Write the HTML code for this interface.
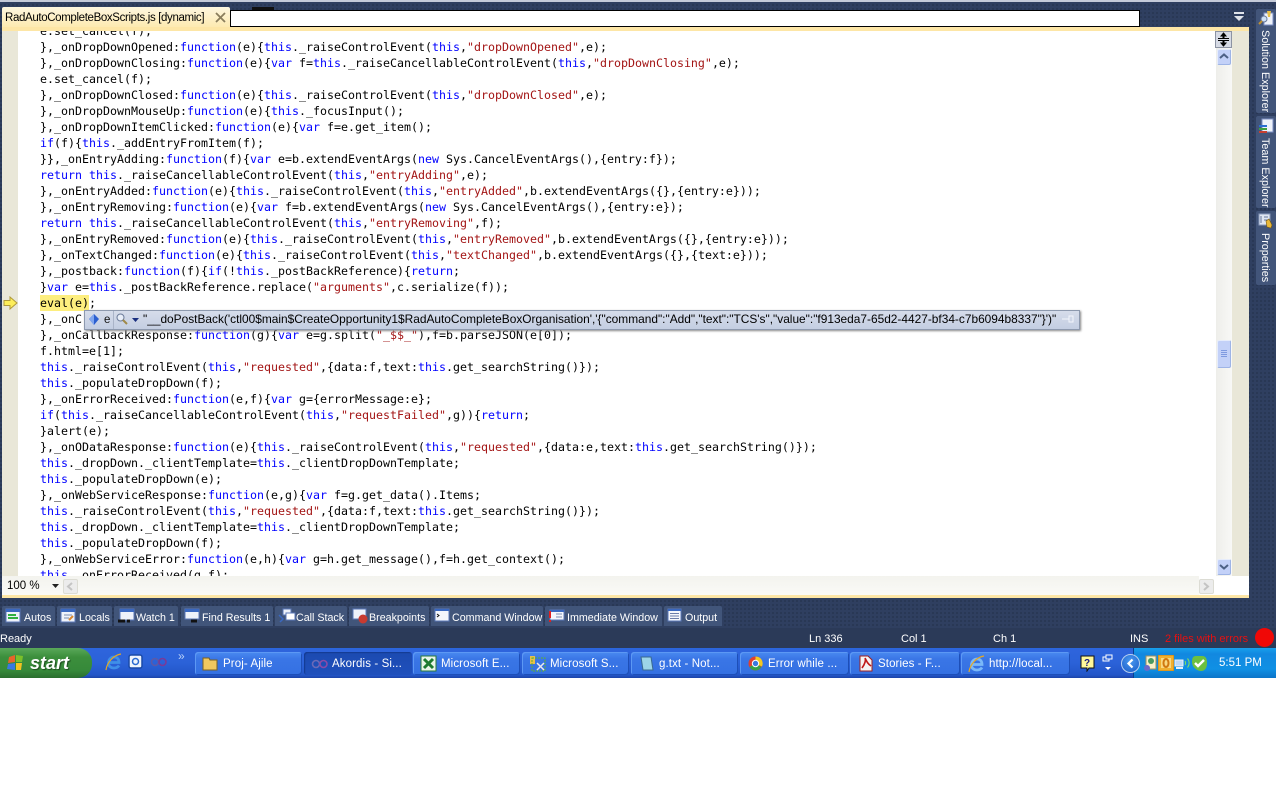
<!DOCTYPE html>
<html><head><meta charset="utf-8"><title>RadAutoCompleteBoxScripts.js</title>
<style>
html,body{margin:0;padding:0;background:#fff;width:1280px;height:800px;overflow:hidden}
*{box-sizing:border-box}
.a{position:absolute}
#root{position:absolute;left:0;top:0;width:1276px;height:800px;overflow:hidden;font-family:"Liberation Sans",sans-serif;font-size:11px;background:#fff}
#bg{left:0;top:0;width:1276px;height:628px;background-color:#2f3f60;background-image:radial-gradient(circle at 1px 1px,#273551 0.9px,transparent 1px);background-size:4px 4px}
pre{margin:0;font-family:"DejaVu Sans Mono",monospace;font-size:11.635px;line-height:16px;color:#000;position:absolute;left:40px;top:-8px}
pre i{font-style:normal;color:#0000ff}
pre u{text-decoration:none;color:#a31515}
.tab{position:absolute;top:606px;height:20px;background:#41557a;border-radius:2px 2px 0 0;color:#fff;font-size:10.7px;line-height:23px;white-space:nowrap}
.tab span{position:absolute;top:1px}
.tab svg{position:absolute;left:3px;top:2px}
.tb{position:absolute;top:652px;height:23px;background:linear-gradient(#4a8af0,#3a76e6 30%,#3470e2);border-radius:3px;color:#fff;font-size:11.5px;line-height:23px;white-space:nowrap;box-shadow:inset 1px 1px 0 #5c98f4,inset -1px -1px 0 #1d4fb8}
.tb span{position:absolute;left:28px;top:1px;letter-spacing:.1px}
.tb svg{position:absolute;left:7px;top:3px}
.side{position:absolute;left:1256px;width:20px;background:#42557a;color:#fff;font-size:10.8px;border-radius:2px}
.side span{position:absolute;left:2px;writing-mode:vertical-rl;white-space:nowrap;line-height:14px}
.st{position:absolute;top:631px;color:#fff;font-size:11px;line-height:16px;white-space:nowrap}
</style></head><body>
<div id="root">
<div class="a" id="bg"></div>
<div class="a" style="left:0;top:0;width:1276px;height:2px;background:#c4cad8"></div>

<div class="a" style="left:252px;top:7px;width:22px;height:3px;background:#111"></div>

<!-- tab -->
<div class="a" style="left:2px;top:7px;width:228px;height:22px;background:linear-gradient(#fdf6df,#fde9ac);border-radius:2px 2px 0 0"></div>
<div class="a" style="left:5px;top:10px;font-size:11.5px;letter-spacing:-.36px;line-height:17px;white-space:nowrap;color:#000">RadAutoCompleteBoxScripts.js [dynamic]</div>
<svg class="a" style="left:214px;top:12px" width="13" height="12" viewBox="0 0 13 12"><path d="M2 1L11 10M11 1L2 10" stroke="#8a7d5c" stroke-width="1.8" fill="none"/></svg>
<div class="a" style="left:230px;top:10px;width:910px;height:17px;background:#fff;border:1px solid #000"></div>
<svg class="a" style="left:1233px;top:12px" width="12" height="10" viewBox="0 0 12 10"><rect x="1" y="0" width="10" height="2" fill="#dfe3ea"/><path d="M1 4H11L6 9Z" fill="#dfe3ea"/></svg>

<!-- editor -->
<div class="a" style="left:2px;top:27px;width:1247px;height:571px;background:#fff"></div>
<div class="a" style="left:2px;top:27px;width:1247px;height:4px;background:#fde6a6"></div>
<div class="a" style="left:2px;top:31px;width:16px;height:545px;background:#e9e7d8"></div>
<div class="a" style="left:18px;top:31px;width:1198px;height:545px;overflow:hidden;background:#fff">
<div class="a" style="left:22px;top:264px;width:49px;height:16px;background:#fdee7e"></div>
<pre style="left:22px;top:-8px">e.set_cancel(f);
},_onDropDownOpened:<i>function</i>(e){<i>this</i>._raiseControlEvent(<i>this</i>,<u>"dropDownOpened"</u>,e);
},_onDropDownClosing:<i>function</i>(e){<i>var</i> f=<i>this</i>._raiseCancellableControlEvent(<i>this</i>,<u>"dropDownClosing"</u>,e);
e.set_cancel(f);
},_onDropDownClosed:<i>function</i>(e){<i>this</i>._raiseControlEvent(<i>this</i>,<u>"dropDownClosed"</u>,e);
},_onDropDownMouseUp:<i>function</i>(e){<i>this</i>._focusInput();
},_onDropDownItemClicked:<i>function</i>(e){<i>var</i> f=e.get_item();
<i>if</i>(f){<i>this</i>._addEntryFromItem(f);
}},_onEntryAdding:<i>function</i>(f){<i>var</i> e=b.extendEventArgs(<i>new</i> Sys.CancelEventArgs(),{entry:f});
<i>return</i> <i>this</i>._raiseCancellableControlEvent(<i>this</i>,<u>"entryAdding"</u>,e);
},_onEntryAdded:<i>function</i>(e){<i>this</i>._raiseControlEvent(<i>this</i>,<u>"entryAdded"</u>,b.extendEventArgs({},{entry:e}));
},_onEntryRemoving:<i>function</i>(e){<i>var</i> f=b.extendEventArgs(<i>new</i> Sys.CancelEventArgs(),{entry:e});
<i>return</i> <i>this</i>._raiseCancellableControlEvent(<i>this</i>,<u>"entryRemoving"</u>,f);
},_onEntryRemoved:<i>function</i>(e){<i>this</i>._raiseControlEvent(<i>this</i>,<u>"entryRemoved"</u>,b.extendEventArgs({},{entry:e}));
},_onTextChanged:<i>function</i>(e){<i>this</i>._raiseControlEvent(<i>this</i>,<u>"textChanged"</u>,b.extendEventArgs({},{text:e}));
},_postback:<i>function</i>(f){<i>if</i>(!<i>this</i>._postBackReference){<i>return</i>;
}<i>var</i> e=<i>this</i>._postBackReference.replace(<u>"arguments"</u>,c.serialize(f));
eval(e);
},_onC
},_onCallbackResponse:<i>function</i>(g){<i>var</i> e=g.split(<u>"_$$_"</u>),f=b.parseJSON(e[0]);
f.html=e[1];
<i>this</i>._raiseControlEvent(<i>this</i>,<u>"requested"</u>,{data:f,text:<i>this</i>.get_searchString()});
<i>this</i>._populateDropDown(f);
},_onErrorReceived:<i>function</i>(e,f){<i>var</i> g={errorMessage:e};
<i>if</i>(<i>this</i>._raiseCancellableControlEvent(<i>this</i>,<u>"requestFailed"</u>,g)){<i>return</i>;
}alert(e);
},_onODataResponse:<i>function</i>(e){<i>this</i>._raiseControlEvent(<i>this</i>,<u>"requested"</u>,{data:e,text:<i>this</i>.get_searchString()});
<i>this</i>._dropDown._clientTemplate=<i>this</i>._clientDropDownTemplate;
<i>this</i>._populateDropDown(e);
},_onWebServiceResponse:<i>function</i>(e,g){<i>var</i> f=g.get_data().Items;
<i>this</i>._raiseControlEvent(<i>this</i>,<u>"requested"</u>,{data:f,text:<i>this</i>.get_searchString()});
<i>this</i>._dropDown._clientTemplate=<i>this</i>._clientDropDownTemplate;
<i>this</i>._populateDropDown(f);
},_onWebServiceError:<i>function</i>(e,h){<i>var</i> g=h.get_message(),f=h.get_context();
<i>this</i>._onErrorReceived(g,f);</pre>
</div>
<!-- arrow -->
<svg class="a" style="left:3px;top:296px" width="15" height="14" viewBox="0 0 15 14"><path d="M1 4.5H7V1L14 7L7 13V9.5H1Z" fill="#fdee5a" stroke="#b09a3a"/></svg>

<!-- v scrollbar -->
<div class="a" style="left:1216px;top:31px;width:16px;height:545px;background:linear-gradient(90deg,#eeeeea,#f8f8f6)"></div>
<div class="a" style="left:1232px;top:31px;width:17px;height:545px;background:#e9e7d8"></div>
<div class="a" style="left:1215px;top:31px;width:17px;height:17px;background:#d6dae4;border:1px solid #8c93a3"></div>
<svg class="a" style="left:1216px;top:32px" width="15" height="15" viewBox="0 0 15 15"><path d="M7.5 1L10 4H8V6H7V4H5ZM7.5 14L5 11H7V9H8V11H10ZM2 6.5H13M2 8.5H13" stroke="#000" stroke-width="1" fill="#000"/></svg>
<div class="a" style="left:1217px;top:49px;width:14px;height:16px;background:#c3d1f8;border:1px solid #e6ecfb;border-right-color:#9eb4e6;border-bottom-color:#9eb4e6;border-radius:2px"></div>
<svg class="a" style="left:1219px;top:53px" width="10" height="7" viewBox="0 0 10 7"><path d="M1 5L5 1.5L9 5" stroke="#4d6185" stroke-width="2" fill="none"/></svg>
<div class="a" style="left:1217px;top:340px;width:14px;height:28px;background:#c3d1f8;border:1px solid #e6ecfb;border-right-color:#9eb4e6;border-bottom-color:#9eb4e6;border-radius:2px"></div>
<svg class="a" style="left:1220px;top:349px" width="8" height="10" viewBox="0 0 8 10"><path d="M1 1.5H7M1 3.5H7M1 5.5H7M1 7.5H7" stroke="#7f9ae0"/></svg>
<div class="a" style="left:1217px;top:559px;width:14px;height:16px;background:#c3d1f8;border:1px solid #e6ecfb;border-right-color:#9eb4e6;border-bottom-color:#9eb4e6;border-radius:2px"></div>
<svg class="a" style="left:1219px;top:563px" width="10" height="7" viewBox="0 0 10 7"><path d="M1 2L5 5.5L9 2" stroke="#4d6185" stroke-width="2" fill="none"/></svg>

<!-- tooltip -->
<div class="a" style="left:84px;top:310px;width:996px;height:20px;background:linear-gradient(#d6dcea,#c4cee2);border:1px solid #8d99ae;box-shadow:1px 1px 2px #888"></div>
<div class="a" style="left:113px;top:311px;width:1px;height:18px;background:#aab4c8"></div>
<svg class="a" style="left:88px;top:313px" width="12" height="13" viewBox="0 0 12 13"><path d="M6 1L11 6L6 12L1 6Z" fill="#2b5fd0"/><path d="M6 1L1 6L6 12Z" fill="#7fa5ee"/></svg>
<div class="a" style="left:104px;top:312px;font-size:11.5px;line-height:16px;color:#111">e</div>
<svg class="a" style="left:115px;top:312px" width="14" height="15" viewBox="0 0 14 15"><circle cx="5.5" cy="5.5" r="3.5" fill="#e8eef8" stroke="#6b7b99"/><path d="M8 8L12 12" stroke="#a08a4a" stroke-width="2"/></svg>
<svg class="a" style="left:132px;top:318px" width="7" height="4" viewBox="0 0 7 4"><path d="M0 0H7L3.5 4Z" fill="#1a2f80"/></svg>
<div class="a" id="tt" style="left:143px;top:311px;font-size:11.9px;line-height:17px;color:#000;white-space:nowrap;font-family:'Liberation Sans',sans-serif">"__doPostBack('ctl00$main$CreateOpportunity1$RadAutoCompleteBoxOrganisation','{"command":"Add","text":"TCS's","value":"f913eda7-65d2-4427-bf34-c7b6094b8337"}')"</div>
<svg class="a" style="left:1062px;top:315px" width="12" height="9" viewBox="0 0 12 9"><path d="M0 4H7M7 1H11V7H7Z" stroke="#f2f5fb" fill="none"/></svg>

<!-- bottom bar -->
<div class="a" style="left:2px;top:576px;width:1197px;height:19px;background:linear-gradient(#f3f3ee,#fafaf7)"></div>
<div class="a" style="left:1214px;top:576px;width:35px;height:19px;background:#fff"></div>
<div class="a" style="left:7px;top:578px;font-size:11.5px;line-height:16px;color:#000">100 %</div>
<svg class="a" style="left:52px;top:584px" width="7" height="4" viewBox="0 0 7 4"><path d="M0 0H7L3.5 4Z" fill="#222"/></svg>
<div class="a" style="left:63px;top:579px;width:15px;height:15px;background:#ececec;border:1px solid #dcdcd4;border-radius:2px"></div>
<svg class="a" style="left:66px;top:582px" width="8" height="9" viewBox="0 0 8 9"><path d="M6 1L2 4.5L6 8" stroke="#c4c4c4" stroke-width="2" fill="none"/></svg>
<div class="a" style="left:1199px;top:579px;width:15px;height:15px;background:#ececec;border:1px solid #dcdcd4;border-radius:2px"></div>
<svg class="a" style="left:1202px;top:582px" width="8" height="9" viewBox="0 0 8 9"><path d="M2 1L6 4.5L2 8" stroke="#c4c4c4" stroke-width="2" fill="none"/></svg>
<div class="a" style="left:2px;top:595px;width:1247px;height:3px;background:#fde6a6"></div>

<!-- side tabs -->
<div class="side" style="top:9px;height:104px"><span style="top:21px">Solution Explorer</span></div>
<div class="side" style="top:116px;height:92px"><span style="top:22px">Team Explorer</span></div>
<div class="side" style="top:211px;height:74px"><span style="top:22px">Properties</span></div>
<svg class="a" style="left:1258px;top:10px" width="16" height="16" viewBox="0 0 16 16"><rect x="6" y="3" width="9" height="12" fill="#eef2fa" stroke="#7c90c4"/><path d="M9 1H13L12 7H10Z" fill="#e8c04a"/><circle cx="6" cy="9" r="3" fill="#cfe0f4" stroke="#66779a"/><path d="M4 11L1 14" stroke="#c09030" stroke-width="2"/></svg>
<svg class="a" style="left:1258px;top:118px" width="16" height="16" viewBox="0 0 16 16"><rect x="4" y="1" width="11" height="13" fill="#eef2fa" stroke="#7c90c4"/><rect x="1" y="7" width="8" height="2" fill="#2a6fd0"/><rect x="1" y="10" width="8" height="2" fill="#3fa040"/><rect x="1" y="13" width="8" height="2" fill="#c84030"/></svg>
<svg class="a" style="left:1258px;top:213px" width="16" height="16" viewBox="0 0 16 16"><rect x="1" y="1" width="11" height="11" fill="#dfe6f2" stroke="#8a9abc"/><path d="M3 3V10M6 4H10M6 7H10" stroke="#66779a"/><path d="M8 8L11 6L14 12L13 15L9 14Z" fill="#e8b83a" stroke="#7a5a10" stroke-width=".6"/></svg>

<!-- debug tabs -->
<div class="tab" style="left:2px;width:53px"><svg width="16" height="15" viewBox="0 0 16 15"><rect x="1" y="1" width="14" height="13" fill="#eef2fa" stroke="#5a78b8"/><rect x="1" y="1" width="14" height="3" fill="#3a68c0"/><rect x="3" y="6" width="8" height="2" fill="#30b040"/><rect x="3" y="9" width="10" height="2" fill="#30b040"/></svg><span style="left:22px">Autos</span></div>
<div class="tab" style="left:57px;width:55px"><svg width="16" height="15" viewBox="0 0 16 15"><rect x="1" y="1" width="14" height="13" fill="#eef2fa" stroke="#5a78b8"/><rect x="1" y="1" width="14" height="3" fill="#3a68c0"/><path d="M4 7H12M4 10H9" stroke="#7a8cb0"/><path d="M9 12L13 8" stroke="#d88830" stroke-width="2"/></svg><span style="left:22px">Locals</span></div>
<div class="tab" style="left:114px;width:64px"><svg width="18" height="16" viewBox="0 0 18 16"><rect x="3" y="1" width="14" height="11" fill="#eef2fa" stroke="#5a78b8"/><rect x="3" y="1" width="14" height="3" fill="#3a68c0"/><path d="M1 13H8M10 13H13" stroke="#111" stroke-width="3"/></svg><span style="left:22px">Watch 1</span></div>
<div class="tab" style="left:181px;width:92px"><svg width="18" height="16" viewBox="0 0 18 16"><rect x="1" y="1" width="14" height="10" fill="#eef2fa" stroke="#5a78b8"/><rect x="1" y="1" width="14" height="3" fill="#3a68c0"/><path d="M7 13H13" stroke="#111" stroke-width="3"/></svg><span style="left:21px">Find Results 1</span></div>
<div class="tab" style="left:275px;width:72px"><svg width="18" height="16" viewBox="0 0 18 16"><rect x="5" y="1" width="8" height="6" fill="#eef2fa" stroke="#5a78b8"/><rect x="8" y="5" width="9" height="7" fill="#fff" stroke="#5a78b8"/><path d="M1 7L5 11L2 14" stroke="#3a68c0" fill="none" stroke-width="1.5"/></svg><span style="left:21px">Call Stack</span></div>
<div class="tab" style="left:349px;width:80px"><svg width="18" height="16" viewBox="0 0 18 16"><rect x="1" y="1" width="13" height="10" fill="#eef2fa" stroke="#5a78b8"/><circle cx="11" cy="11" r="4.5" fill="#c83a30"/></svg><span style="left:20px">Breakpoints</span></div>
<div class="tab" style="left:431px;width:112px"><svg width="18" height="16" viewBox="0 0 18 16"><rect x="1" y="1" width="14" height="12" fill="#f4f6fb" stroke="#5a78b8"/><rect x="1" y="1" width="14" height="2" fill="#3a68c0"/><path d="M3 6L5 7.5L3 9" stroke="#111" fill="none"/></svg><span style="left:21px">Command Window</span></div>
<div class="tab" style="left:545px;width:117px"><svg width="18" height="16" viewBox="0 0 18 16"><rect x="2" y="2" width="14" height="10" fill="#f4f6fb" stroke="#5a78b8"/><rect x="2" y="2" width="14" height="2" fill="#3a68c0"/><path d="M8 6H14M8 9H14" stroke="#7a8cb0"/><path d="M2 3V10M2 12V14" stroke="#e02020" stroke-width="2"/></svg><span style="left:22px">Immediate Window</span></div>
<div class="tab" style="left:664px;width:58px"><svg width="16" height="15" viewBox="0 0 16 15"><rect x="1" y="1" width="13" height="12" fill="#f4f6fb" stroke="#5a78b8"/><rect x="1" y="1" width="13" height="2" fill="#3a68c0"/><path d="M3 5.5H12M3 8H12M3 10.5H12" stroke="#6a7ca8"/></svg><span style="left:21px">Output</span></div>

<!-- status bar -->
<div class="a" style="left:0;top:628px;width:1276px;height:20px;background:#2b3a58"></div>
<div class="st" style="left:0">Ready</div>
<div class="st" style="left:809px">Ln 336</div>
<div class="st" style="left:901px">Col 1</div>
<div class="st" style="left:993px">Ch 1</div>
<div class="st" style="left:1130px">INS</div>
<div class="st" style="left:1165px;color:#e81010">2 files with errors</div>
<div class="a" style="left:1255px;top:628px;width:19px;height:19px;border-radius:50%;background:#f00806"></div>

<!-- taskbar -->
<div class="a" style="left:0;top:648px;width:1276px;height:30px;background:linear-gradient(#2a66dc,#2e64dc 8%,#2b62d8 50%,#2356c8 90%,#1c44a8)"></div>
<div class="a" style="left:0;top:648px;width:92px;height:30px;background:linear-gradient(#5aa85a,#3c8f3c 30%,#36893a 75%,#2a6e2e);border-radius:0 14px 14px 0"></div>
<svg class="a" style="left:6px;top:653px" width="20" height="20" viewBox="0 0 20 20"><path d="M3 4L9 2L9 9L2 10Z" fill="#e8642a"/><path d="M10 2L17 3L16 9L10 9Z" fill="#7cc02a"/><path d="M2 11L9 10L9 17L1 16Z" fill="#3a78e0"/><path d="M10 10L16 10L15 17L10 17Z" fill="#f4c220"/></svg>
<div class="a" style="left:30px;top:652px;font-size:18px;line-height:22px;font-weight:bold;font-style:italic;color:#fff;text-shadow:1px 1px 1px #1c4a1c">start</div>
<svg class="a" style="left:105px;top:653px" width="18" height="18" viewBox="0 0 18 18"><path d="M3.5 9.5H14C14 6 12 4 9 4C6 4 3.5 6.5 3.5 10C3.5 13.5 6 15 9 15C11 15 13 14 14 12.5" stroke="#3f8fe8" stroke-width="2.8" fill="none"/><path d="M1 17C2 9 9 2 16 1" stroke="#e8a820" stroke-width="1.2" fill="none"/></svg>
<svg class="a" style="left:128px;top:653px" width="16" height="17" viewBox="0 0 16 17"><rect x="1" y="2" width="13" height="13" rx="2" fill="#eef4fc" stroke="#1a4aa8" stroke-width="1.5"/><circle cx="7.5" cy="8.5" r="3" fill="none" stroke="#2a6ad0" stroke-width="1.5"/></svg>
<svg class="a" style="left:150px;top:657px" width="18" height="10" viewBox="0 0 18 10"><circle cx="5" cy="5" r="3.5" fill="none" stroke="#5a5aa8" stroke-width="1.6"/><circle cx="12.5" cy="5" r="3.5" fill="none" stroke="#7a3a98" stroke-width="1.6"/></svg>
<div class="a" style="left:178px;top:649px;font-size:12px;line-height:14px;color:#b8d0f8">»</div>

<div class="tb" style="left:195px;width:107px"><svg width="18" height="17" viewBox="0 0 18 17"><path d="M1 3H7L8 5H15V15H1Z" fill="#f0c860" stroke="#7a6020"/></svg><span>Proj- Ajile</span></div>
<div class="tb" style="left:304px;width:108px;background:linear-gradient(#1c4ab0,#1f50bc);box-shadow:inset 1px 1px 1px #143a90"><svg width="18" height="17" viewBox="0 0 18 17"><circle cx="5" cy="9" r="3.5" fill="none" stroke="#6a6ab8" stroke-width="1.6"/><circle cx="12.5" cy="9" r="3.5" fill="none" stroke="#8a4aa8" stroke-width="1.6"/></svg><span>Akordis - Si...</span></div>
<div class="tb" style="left:413px;width:107px"><svg width="18" height="17" viewBox="0 0 18 17"><rect x="1" y="1" width="15" height="15" fill="#e8f4e8" stroke="#2a7a3a"/><path d="M4 4L13 13M13 4L4 13" stroke="#1d7a30" stroke-width="3"/></svg><span>Microsoft E...</span></div>
<div class="tb" style="left:522px;width:107px"><svg width="18" height="17" viewBox="0 0 18 17"><rect x="1" y="1" width="5" height="8" fill="#e8c04a"/><rect x="3" y="3" width="13" height="13" fill="none" stroke="#60b030" stroke-dasharray="2 1"/><path d="M8 15L15 8M8 8L15 15" stroke="#e8e8f0" stroke-width="1.5"/></svg><span>Microsoft S...</span></div>
<div class="tb" style="left:631px;width:107px"><svg width="18" height="17" viewBox="0 0 18 17"><path d="M3 2H13L15 15H5Z" fill="#9cd4e8" stroke="#3a6a90"/></svg><span>g.txt - Not...</span></div>
<div class="tb" style="left:740px;width:109px"><svg width="18" height="17" viewBox="0 0 18 17"><circle cx="8.5" cy="8.5" r="7" fill="#e04030"/><path d="M8.5 8.5L2.4 12A7 7 0 0 0 14.5 12Z" fill="#38a048"/><path d="M8.5 1.5A7 7 0 0 1 15 11.5L8.5 8.5Z" fill="#f4c820"/><circle cx="8.5" cy="8.5" r="3.2" fill="#3a78e0" stroke="#fff"/></svg><span>Error while ...</span></div>
<div class="tb" style="left:850px;width:110px"><svg width="18" height="17" viewBox="0 0 18 17"><path d="M3 1H11L15 5V16H3Z" fill="#f4f4f4" stroke="#a02020"/><path d="M5 13C8 9 9 5 8 3C10 7 11 9 14 11" stroke="#c01818" fill="none" stroke-width="1.6"/></svg><span>Stories - F...</span></div>
<div class="tb" style="left:961px;width:109px"><svg width="18" height="18" viewBox="0 0 18 18"><path d="M3.5 9.5H14C14 6 12 4 9 4C6 4 3.5 6.5 3.5 10C3.5 13.5 6 15 9 15C11 15 13 14 14 12.5" stroke="#7ab8f8" stroke-width="2.8" fill="none"/><path d="M1 17C2 9 9 2 16 1" stroke="#e8a820" stroke-width="1.2" fill="none"/></svg><span>http://local...</span></div>
<svg class="a" style="left:1080px;top:655px" width="15" height="17" viewBox="0 0 15 17"><path d="M1 1H14V13H9L7 16V13H1Z" fill="#fff89a" stroke="#111"/><text x="4" y="11" font-family="'Liberation Sans',sans-serif" font-size="10" font-weight="bold" fill="#1a1a80">?</text></svg>
<svg class="a" style="left:1102px;top:654px" width="12" height="18" viewBox="0 0 12 18"><rect x="1" y="3" width="6" height="4" fill="none" stroke="#fff"/><rect x="4" y="1" width="6" height="4" fill="#2a60d8" stroke="#fff"/><path d="M3 13H9L6 16Z" fill="#fff"/></svg>

<!-- tray -->
<div class="a" style="left:1133px;top:648px;width:143px;height:30px;background:linear-gradient(#18a0ec,#1288e0 20%,#1090e4 70%,#0c74c8);border-left:1px solid #0a4090"></div>
<div class="a" style="left:1121px;top:654px;width:19px;height:19px;border-radius:50%;background:radial-gradient(circle at 50% 35%,#4a9af0,#1a5ac8);border:1px solid #b8d0f0"></div>
<svg class="a" style="left:1126px;top:658px" width="9" height="11" viewBox="0 0 9 11"><path d="M6.5 1.5L2.5 5.5L6.5 9.5" stroke="#fff" stroke-width="2.2" fill="none"/></svg>
<svg class="a" style="left:1143px;top:655px" width="14" height="17" viewBox="0 0 14 17"><rect x="3" y="1" width="10" height="13" fill="#f8f0c8" stroke="#a09060"/><circle cx="8" cy="6" r="3" fill="#4a9a60"/><circle cx="4" cy="13" r="3" fill="#6a6ac8"/></svg>
<svg class="a" style="left:1158px;top:655px" width="16" height="16" viewBox="0 0 16 16"><rect x="0" y="0" width="16" height="16" fill="#f0b030" stroke="#c88010"/><rect x="3" y="3" width="10" height="10" fill="#f8d880"/><ellipse cx="8" cy="8" rx="2.5" ry="4" fill="none" stroke="#d07810" stroke-width="2"/></svg>
<svg class="a" style="left:1174px;top:655px" width="18" height="16" viewBox="0 0 18 16"><rect x="1" y="5" width="8" height="6" fill="#bcd8f8" stroke="#e8f0fc"/><rect x="2" y="12" width="7" height="2" fill="#e8f0fc"/><path d="M11 6A4 4 0 0 1 11 10M13.5 3.5A7 7 0 0 1 13.5 12.5" stroke="#80e060" fill="none"/></svg>
<svg class="a" style="left:1191px;top:655px" width="17" height="17" viewBox="0 0 17 17"><path d="M5 1H11C15 1 16 4 16 8C16 13 14 16 10 16C7 16 1 13 1 7C1 3 2 1 5 1Z" fill="#6cc040"/><path d="M4 8L7 11L13 5" stroke="#fff" stroke-width="2.4" fill="none"/></svg>
<div class="a" style="left:1219px;top:655px;font-size:11.5px;line-height:16px;color:#fff;white-space:nowrap">5:51 PM</div>
</div>
</body></html>
